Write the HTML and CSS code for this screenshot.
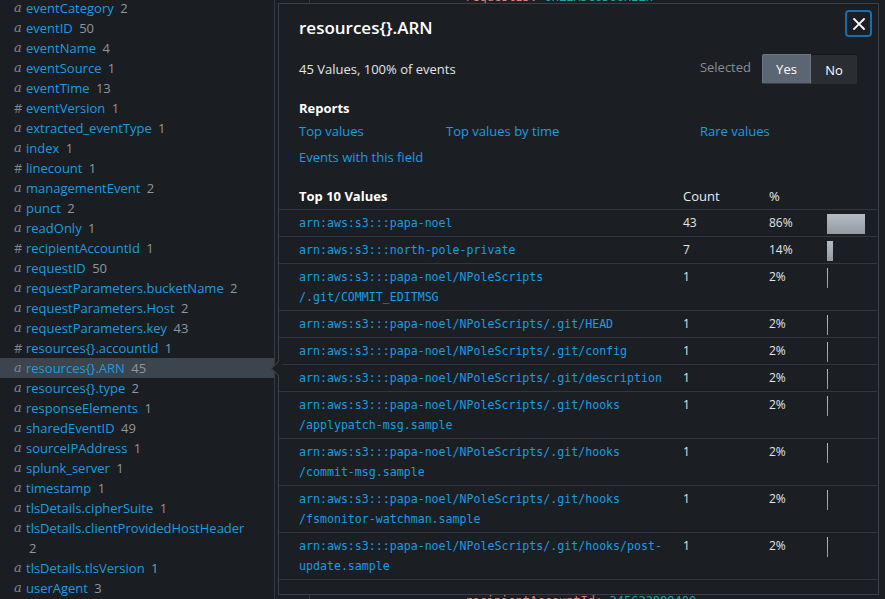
FILE: index.html
```html
<!DOCTYPE html>
<html>
<head>
<meta charset="utf-8">
<link rel="stylesheet" href="styles.css">
</head>
<body>
<div class="app">
  <aside class="sidebar">
    <ul class="fields">
      <li class="field"><span class="type str">a</span><span class="label"><span class="name">eventCategory</span> <span class="count">2</span></span></li>
      <li class="field"><span class="type str">a</span><span class="label"><span class="name">eventID</span> <span class="count">50</span></span></li>
      <li class="field"><span class="type str">a</span><span class="label"><span class="name">eventName</span> <span class="count">4</span></span></li>
      <li class="field"><span class="type str">a</span><span class="label"><span class="name">eventSource</span> <span class="count">1</span></span></li>
      <li class="field"><span class="type str">a</span><span class="label"><span class="name">eventTime</span> <span class="count">13</span></span></li>
      <li class="field"><span class="type num">#</span><span class="label"><span class="name">eventVersion</span> <span class="count">1</span></span></li>
      <li class="field"><span class="type str">a</span><span class="label"><span class="name">extracted_eventType</span> <span class="count">1</span></span></li>
      <li class="field"><span class="type str">a</span><span class="label"><span class="name">index</span> <span class="count">1</span></span></li>
      <li class="field"><span class="type num">#</span><span class="label"><span class="name">linecount</span> <span class="count">1</span></span></li>
      <li class="field"><span class="type str">a</span><span class="label"><span class="name">managementEvent</span> <span class="count">2</span></span></li>
      <li class="field"><span class="type str">a</span><span class="label"><span class="name">punct</span> <span class="count">2</span></span></li>
      <li class="field"><span class="type str">a</span><span class="label"><span class="name">readOnly</span> <span class="count">1</span></span></li>
      <li class="field"><span class="type num">#</span><span class="label"><span class="name">recipientAccountId</span> <span class="count">1</span></span></li>
      <li class="field"><span class="type str">a</span><span class="label"><span class="name">requestID</span> <span class="count">50</span></span></li>
      <li class="field"><span class="type str">a</span><span class="label"><span class="name">requestParameters.bucketName</span> <span class="count">2</span></span></li>
      <li class="field"><span class="type str">a</span><span class="label"><span class="name">requestParameters.Host</span> <span class="count">2</span></span></li>
      <li class="field"><span class="type str">a</span><span class="label"><span class="name">requestParameters.key</span> <span class="count">43</span></span></li>
      <li class="field"><span class="type num">#</span><span class="label"><span class="name">resources{}.accountId</span> <span class="count">1</span></span></li>
      <li class="field selected"><span class="type str">a</span><span class="label"><span class="name">resources{}.ARN</span> <span class="count">45</span></span></li>
      <li class="field"><span class="type str">a</span><span class="label"><span class="name">resources{}.type</span> <span class="count">2</span></span></li>
      <li class="field"><span class="type str">a</span><span class="label"><span class="name">responseElements</span> <span class="count">1</span></span></li>
      <li class="field"><span class="type str">a</span><span class="label"><span class="name">sharedEventID</span> <span class="count">49</span></span></li>
      <li class="field"><span class="type str">a</span><span class="label"><span class="name">sourceIPAddress</span> <span class="count">1</span></span></li>
      <li class="field"><span class="type str">a</span><span class="label"><span class="name">splunk_server</span> <span class="count">1</span></span></li>
      <li class="field"><span class="type str">a</span><span class="label"><span class="name">timestamp</span> <span class="count">1</span></span></li>
      <li class="field"><span class="type str">a</span><span class="label"><span class="name">tlsDetails.cipherSuite</span> <span class="count">1</span></span></li>
      <li class="field"><span class="type str">a</span><span class="label"><span class="name">tlsDetails.clientProvidedHostHeader</span> <span class="count">2</span></span></li>
      <li class="field"><span class="type str">a</span><span class="label"><span class="name">tlsDetails.tlsVersion</span> <span class="count">1</span></span></li>
      <li class="field"><span class="type str">a</span><span class="label"><span class="name">userAgent</span> <span class="count">3</span></span></li>
    </ul>
  </aside>

  <main class="main">
    <div class="gutter"></div>
    <div class="events">
      <div class="ev-line top"><span class="key">requestID:</span> <span class="val">6HZEA5C6DO6H2ZH</span></div>
      <div class="ev-line bottom"><span class="key">recipientAccountId:</span> <span class="val">345622889400</span></div>
    </div>
  </main>

  <section class="popup">
    <button class="close" aria-label="Close">
      <svg width="12" height="12" viewBox="0 0 12 12"><path d="M1 1L11 11M11 1L1 11" stroke="#ffffff" stroke-width="1.8" stroke-linecap="square"/></svg>
    </button>
    <h2 class="title">resources{}.ARN</h2>
    <div class="summary">
      <span class="stats">45 Values, 100% of events</span>
      <div class="sel">
        <span class="sel-label">Selected</span>
        <div class="toggle"><button class="tbtn on">Yes</button><button class="tbtn">No</button></div>
      </div>
    </div>
    <h3 class="reports-title">Reports</h3>
    <div class="links">
      <a class="link">Top values</a>
      <a class="link">Top values by time</a>
      <a class="link">Rare values</a>
      <a class="link">Events with this field</a>
    </div>

    <div class="table">
      <div class="trow thead">
        <span class="c-val">Top 10 Values</span><span class="c-cnt">Count</span><span class="c-pct">%</span><span class="c-bar"></span>
      </div>
      <div class="trow"><span class="c-val mono">arn:aws:s3:::papa-noel</span><span class="c-cnt">43</span><span class="c-pct">86%</span><span class="c-bar"><i class="bar" style="width:38px"></i></span></div>
      <div class="trow"><span class="c-val mono">arn:aws:s3:::north-pole-private</span><span class="c-cnt">7</span><span class="c-pct">14%</span><span class="c-bar"><i class="bar" style="width:6px"></i></span></div>
      <div class="trow"><span class="c-val mono">arn:aws:s3:::papa-noel/NPoleScripts<br>/.git/COMMIT_EDITMSG</span><span class="c-cnt">1</span><span class="c-pct">2%</span><span class="c-bar"><i class="bar" style="width:1px"></i></span></div>
      <div class="trow"><span class="c-val mono">arn:aws:s3:::papa-noel/NPoleScripts/.git/HEAD</span><span class="c-cnt">1</span><span class="c-pct">2%</span><span class="c-bar"><i class="bar" style="width:1px"></i></span></div>
      <div class="trow"><span class="c-val mono">arn:aws:s3:::papa-noel/NPoleScripts/.git/config</span><span class="c-cnt">1</span><span class="c-pct">2%</span><span class="c-bar"><i class="bar" style="width:1px"></i></span></div>
      <div class="trow"><span class="c-val mono">arn:aws:s3:::papa-noel/NPoleScripts/.git/description</span><span class="c-cnt">1</span><span class="c-pct">2%</span><span class="c-bar"><i class="bar" style="width:1px"></i></span></div>
      <div class="trow"><span class="c-val mono">arn:aws:s3:::papa-noel/NPoleScripts/.git/hooks<br>/applypatch-msg.sample</span><span class="c-cnt">1</span><span class="c-pct">2%</span><span class="c-bar"><i class="bar" style="width:1px"></i></span></div>
      <div class="trow"><span class="c-val mono">arn:aws:s3:::papa-noel/NPoleScripts/.git/hooks<br>/commit-msg.sample</span><span class="c-cnt">1</span><span class="c-pct">2%</span><span class="c-bar"><i class="bar" style="width:1px"></i></span></div>
      <div class="trow"><span class="c-val mono">arn:aws:s3:::papa-noel/NPoleScripts/.git/hooks<br>/fsmonitor-watchman.sample</span><span class="c-cnt">1</span><span class="c-pct">2%</span><span class="c-bar"><i class="bar" style="width:1px"></i></span></div>
      <div class="trow"><span class="c-val mono">arn:aws:s3:::papa-noel/NPoleScripts/.git/hooks/post-<br>update.sample</span><span class="c-cnt">1</span><span class="c-pct">2%</span><span class="c-bar"><i class="bar" style="width:1px"></i></span></div>
    </div>
  </section>
</div>
</body>
</html>
```

FILE: styles.css
```css
* { box-sizing: border-box; }
html, body {
  margin: 0;
  padding: 0;
  height: 100%;
  background: #1b1e22;
  overflow: hidden;
}
body {
  font-family: "Open Sans", "Noto Sans", sans-serif;
  font-size: 13px;
  color: #e8eaec;
}
.app {
  position: relative;
  display: flex;
  height: 599px;
  width: 885px;
  overflow: hidden;
}

/* Sidebar */
.sidebar {
  width: 275px;
  flex: none;
  background: #1a1d21;
  border-right: 1px solid #343940;
}
.fields {
  list-style: none;
  margin: -2px 0 0 0;
  padding: 0;
}
.field {
  display: flex;
  align-items: flex-start;
  padding-left: 14px;
  line-height: 20px;
}
.field.selected {
  background: #3c444d;
}
.type {
  width: 12px;
  flex: none;
  color: #7e868f;
}
.type.str {
  font-family: "DejaVu Serif", "Liberation Serif", serif;
  font-style: italic;
  font-size: 13px;
}
.type.num {
  font-size: 13px;
}
.label {
  width: 226px;
}
.name {
  color: #1a9ce0;
}
.count {
  color: #8f969d;
  margin-left: 3px;
}

/* Main area behind popup */
.main {
  flex: 1;
  display: flex;
  background: #1b1e22;
}
.gutter {
  width: 35px;
  flex: none;
  border-right: 1px solid #32373d;
}
.events {
  flex: 1;
  display: flex;
  flex-direction: column;
  justify-content: space-between;
  padding-left: 155px;
  font-family: "DejaVu Sans Mono", monospace;
  font-size: 12px;
  line-height: 14px;
}
.ev-line.top { margin-top: -10px; }
.ev-line.bottom { margin-bottom: -9px; }
.key { color: #d9847a; }
.val { color: #1fa3a6; }

/* Popup */
.popup {
  position: absolute;
  left: 278px;
  top: 3px;
  width: 601px;
  height: 592px;
  background: #1b1f23;
  border: 1px solid #3b4047;
  padding: 13px 0 0 20px;
}
.popup::before {
  content: "";
  position: absolute;
  left: -6px;
  top: 359px;
  width: 10px;
  height: 10px;
  background: #1b1f23;
  border-left: 1px solid #3b4047;
  border-bottom: 1px solid #3b4047;
  transform: rotate(45deg);
}
.close {
  position: absolute;
  top: 6px;
  right: 6px;
  width: 27px;
  height: 27px;
  border: 2px solid #1c6bab;
  border-radius: 4px;
  background: #1b1f23;
  display: flex;
  align-items: center;
  justify-content: center;
  padding: 0;
}
.title {
  margin: 0;
  font-size: 17px;
  line-height: 22px;
  font-weight: 600;
  color: #ffffff;
}
.summary {
  display: flex;
  align-items: center;
  justify-content: space-between;
  margin-top: 15px;
  padding-right: 21px;
  height: 30px;
}
.stats { color: #e3e5e7; }
.sel {
  display: flex;
  align-items: center;
  gap: 11px;
}
.sel-label { color: #858c94; position: relative; top: -2px; }
.toggle {
  display: flex;
}
.tbtn {
  font-family: inherit;
  font-size: 13px;
  color: #ffffff;
  height: 30px;
  border: none;
  padding: 0;
  background: #2a2e33;
  width: 46px;
  border-top: 1px solid #121417;
  border-radius: 0 2px 2px 0;
}
.tbtn.on {
  background: #5c6672;
  width: 49px;
  border: 1px solid #6c7682;
  border-bottom-color: #3a4047;
  border-radius: 2px 0 0 2px;
}
.reports-title {
  margin: 15px 0 0 0;
  font-size: 13px;
  line-height: 18px;
  font-weight: 700;
  color: #ffffff;
}
.links {
  display: grid;
  grid-template-columns: 147px 254px 1fr;
  row-gap: 6px;
  margin-top: 4px;
  line-height: 20px;
}
.link { color: #1a9ce0; }

/* Table */
.table {
  margin: 16px 1px 0 -20px;
}
.trow {
  display: grid;
  grid-template-columns: 404px 86px 58px 1fr;
  padding: 3px 0 3px 0;
  border-bottom: 1px solid #31363c;
  line-height: 20px;
  font-size: 12px;
  color: #e3e5e7;
}
.trow > span { display: block; height: auto; }
.trow > span:first-child { padding-left: 20px; }
.thead {
  font-size: 13px;
  color: #e8eaec;
}
.thead .c-val {
  font-weight: 700;
  color: #ffffff;
}
.mono {
  font-family: "DejaVu Sans Mono", monospace;
  font-size: 11.6px;
  color: #1a9ce0;
  white-space: nowrap;
}
.c-bar { position: relative; }
.bar {
  display: block;
  position: relative;
  top: 1px;
  height: 20px;
  background: linear-gradient(#b6bcc4, #939aa3);
}
```
